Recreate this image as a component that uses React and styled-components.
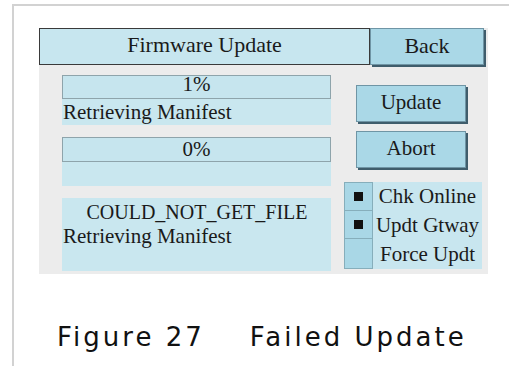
import React from "react";
import styled, { createGlobalStyle } from "styled-components";

const Global = createGlobalStyle`
  html, body { margin: 0; padding: 0; background: #ffffff; }
  body { width: 509px; height: 366px; overflow: hidden; }
`;

const Frame = styled.div`
  margin: 4px 0 0 12px;
  height: 362px;
  border-top: 2px solid #d2d2d2;
  border-left: 2px solid #d2d2d2;
  box-sizing: border-box;
  padding: 22px 0 0 25px;
`;

const Panel = styled.div`
  width: 449px;
  height: 246px;
  background: #ececec;
  box-sizing: border-box;
  display: flex;
  flex-direction: column;
  font-family: "Liberation Serif", "Times New Roman", serif;
  color: #1a1a1a;
`;

const Header = styled.div`
  display: flex;
  height: 37px;
  padding-right: 4px;
`;

const Title = styled.div`
  flex: 0 0 331px;
  box-sizing: border-box;
  border: 1px solid #3a3a3a;
  background: #c7e6ef;
  display: flex;
  align-items: center;
  justify-content: center;
  font-size: 22px;
  padding-bottom: 3px;
`;

const RaisedButton = styled.div`
  box-sizing: border-box;
  width: ${(p) => p.$w}px;
  height: ${(p) => p.$h}px;
  background: #aad8e7;
  border: 1px solid #6f95a5;
  box-shadow: 2px 2px 0 #3f5d6c;
  display: flex;
  align-items: center;
  justify-content: center;
  font-size: ${(p) => p.$fs}px;
  padding-bottom: 2px;
  flex: 0 0 auto;
`;

const Body = styled.div`
  display: flex;
  padding: 10px 0 0 23px;
`;

const LeftCol = styled.div`
  width: 269px;
  display: flex;
  flex-direction: column;
  gap: 12px;
`;

const Block = styled.div`
  height: ${(p) => p.$h}px;
  background: #c9e7ef;
  display: flex;
  flex-direction: column;
  font-size: 21px;
`;

const Bar = styled.div`
  height: ${(p) => p.$h}px;
  box-sizing: border-box;
  border: 1px solid #8ea4ab;
  background: #c6e5ee;
  display: flex;
  align-items: center;
  justify-content: center;
  font-size: 21px;
  line-height: 1;
  padding-bottom: ${(p) => p.$lift || 0}px;
`;

const Status = styled.div`
  padding-left: 1px;
  line-height: ${(p) => p.$lh || 26}px;
  font-size: ${(p) => p.$fs || 21}px;
  text-align: ${(p) => (p.$center ? "center" : "left")};
  white-space: nowrap;
`;

const Message = styled.div`
  padding-top: 2px;
  display: flex;
  flex-direction: column;
`;

const RightCol = styled.div`
  margin-left: 13px;
  display: flex;
  flex-direction: column;
`;

const Buttons = styled.div`
  margin: 10px 0 0 12px;
  display: flex;
  flex-direction: column;
  gap: 9px;
`;

const OptionList = styled.div`
  margin-top: 14px;
  width: 138px;
  display: flex;
  flex-direction: column;
  background: #c8e6ef;
`;

const OptionRow = styled.div`
  display: flex;
  height: ${(p) => p.$h}px;
`;

const OptionBox = styled.div`
  flex: 0 0 29px;
  box-sizing: border-box;
  background: #a9d7e6;
  border: 1px solid #86aebb;
  border-top-width: ${(p) => (p.$first ? 1 : 0)}px;
  display: flex;
  align-items: center;
  justify-content: center;
`;

const Square = styled.span`
  width: 9px;
  height: 9px;
  background: #111;
`;

const OptionLabel = styled.div`
  flex: 1;
  display: flex;
  align-items: center;
  justify-content: center;
  font-size: 21px;
  white-space: nowrap;
`;

const Caption = styled.div`
  margin: 48px 0 0 18px;
  font-family: "DejaVu Sans", Verdana, sans-serif;
  font-size: 26px;
  letter-spacing: 3px;
  white-space: pre;
  color: #111;
`;

const options = [
  { label: "Chk Online", checked: true, h: 29 },
  { label: "Updt Gtway", checked: true, h: 28 },
  { label: "Force Updt", checked: false, h: 30 },
];

export default function App() {
  return (
    <>
      <Global />
      <Frame>
        <Panel>
          <Header>
            <Title>Firmware Update</Title>
            <RaisedButton $w={114} $h={37} $fs={22}>Back</RaisedButton>
          </Header>
          <Body>
            <LeftCol>
              <Block $h={50}>
                <Bar $h={24} $lift={5}>1%</Bar>
                <Status>Retrieving Manifest</Status>
              </Block>
              <Block $h={49}>
                <Bar $h={25}>0%</Bar>
              </Block>
              <Block $h={73}>
                <Message>
                  <Status $center $lh={24} $fs={20}>COULD_NOT_GET_FILE</Status>
                  <Status $lh={24}>Retrieving Manifest</Status>
                </Message>
              </Block>
            </LeftCol>
            <RightCol>
              <Buttons>
                <RaisedButton $w={110} $h={37} $fs={21}>Update</RaisedButton>
                <RaisedButton $w={110} $h={37} $fs={21}>Abort</RaisedButton>
              </Buttons>
              <OptionList>
                {options.map((o, i) => (
                  <OptionRow key={o.label} $h={o.h}>
                    <OptionBox $first={i === 0}>{o.checked && <Square />}</OptionBox>
                    <OptionLabel>{o.label}</OptionLabel>
                  </OptionRow>
                ))}
              </OptionList>
            </RightCol>
          </Body>
        </Panel>
        <Caption>{"Figure 27    Failed Update"}</Caption>
      </Frame>
    </>
  );
}
